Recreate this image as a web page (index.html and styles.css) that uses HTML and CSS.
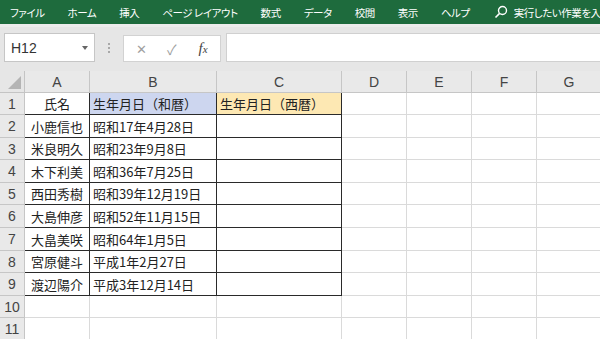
FILE: index.html
```html
<!DOCTYPE html>
<html lang="ja">
<head>
	<meta charset="UTF-8">
	<title>Excel - 生年月日</title>
	<link rel="stylesheet" href="styles.css">
</head>
<body>

	<div class="ribbon">
		<span class="tab">ファイル</span>
		<span class="tab">ホーム</span>
		<span class="tab">挿入</span>
		<span class="tab">ページ レイアウト</span>
		<span class="tab">数式</span>
		<span class="tab">データ</span>
		<span class="tab">校閲</span>
		<span class="tab">表示</span>
		<span class="tab">ヘルプ</span>
		<span class="tell">
			<svg width="14" height="14" viewBox="0 0 14 14">
				<circle cx="8.5" cy="5.5" r="4" fill="none" stroke="#fff" stroke-width="1.4"/>
				<line x1="5.6" y1="8.4" x2="1.5" y2="12.5" stroke="#fff" stroke-width="1.6"/>
			</svg>
			実行したい作業を入
		</span>
	</div>

	<div class="fbar">
		<div class="namebox">
			<span>H12</span>
			<span class="arrow"></span>
		</div>
		<div class="grip">
			<i></i><i></i><i></i>
		</div>
		<div class="fbtns">
			<span class="btn-x">✕</span>
			<span class="btn-ok">✓</span>
			<span class="btn-fx">f<small>x</small></span>
		</div>
		<div class="finput"></div>
	</div>

	<div class="sheet">
		<!-- header row -->
		<div class="corner"></div>
		<div class="ch">A</div>
		<div class="ch">B</div>
		<div class="ch">C</div>
		<div class="ch">D</div>
		<div class="ch">E</div>
		<div class="ch">F</div>
		<div class="ch">G</div>

		<div class="rh">1</div>
		<div class="c t ctr">氏名</div>
		<div class="c t blue">生年月日（和暦）</div>
		<div class="c t yellow">生年月日（西暦）</div>
		<div class="c"></div><div class="c"></div><div class="c"></div><div class="c"></div>

		<div class="rh">2</div>
		<div class="c t ctr">小鹿信也</div>
		<div class="c t">昭和17年4月28日</div>
		<div class="c t"></div>
		<div class="c"></div><div class="c"></div><div class="c"></div><div class="c"></div>

		<div class="rh">3</div>
		<div class="c t ctr">米良明久</div>
		<div class="c t">昭和23年9月8日</div>
		<div class="c t"></div>
		<div class="c"></div><div class="c"></div><div class="c"></div><div class="c"></div>

		<div class="rh">4</div>
		<div class="c t ctr">木下利美</div>
		<div class="c t">昭和36年7月25日</div>
		<div class="c t"></div>
		<div class="c"></div><div class="c"></div><div class="c"></div><div class="c"></div>

		<div class="rh">5</div>
		<div class="c t ctr">西田秀樹</div>
		<div class="c t">昭和39年12月19日</div>
		<div class="c t"></div>
		<div class="c"></div><div class="c"></div><div class="c"></div><div class="c"></div>

		<div class="rh">6</div>
		<div class="c t ctr">大島伸彦</div>
		<div class="c t">昭和52年11月15日</div>
		<div class="c t"></div>
		<div class="c"></div><div class="c"></div><div class="c"></div><div class="c"></div>

		<div class="rh">7</div>
		<div class="c t ctr">大畠美咲</div>
		<div class="c t">昭和64年1月5日</div>
		<div class="c t"></div>
		<div class="c"></div><div class="c"></div><div class="c"></div><div class="c"></div>

		<div class="rh">8</div>
		<div class="c t ctr">宮原健斗</div>
		<div class="c t">平成1年2月27日</div>
		<div class="c t"></div>
		<div class="c"></div><div class="c"></div><div class="c"></div><div class="c"></div>

		<div class="rh">9</div>
		<div class="c t ctr">渡辺陽介</div>
		<div class="c t">平成3年12月14日</div>
		<div class="c t"></div>
		<div class="c"></div><div class="c"></div><div class="c"></div><div class="c"></div>

		<div class="rh">10</div>
		<div class="c"></div><div class="c"></div><div class="c"></div><div class="c"></div>
		<div class="c"></div><div class="c"></div><div class="c"></div>

		<div class="rh">11</div>
		<div class="c"></div><div class="c"></div><div class="c"></div><div class="c"></div>
		<div class="c"></div><div class="c"></div><div class="c"></div>
	</div>

</body>
</html>
```

FILE: styles.css
```css
body {
	margin: 0;
	padding: 0;
	width: 600px;
	height: 339px;
	overflow: hidden;
	font-family: "Noto Sans CJK JP", "Noto Sans", sans-serif;
	background: #fff;
	color: #222;
}

/* ribbon tabs */
.ribbon {
	height: 24px;
	background: #1e6b3d;
	display: flex;
	align-items: center;
	gap: 23px;
	padding-left: 10px;
	color: #fff;
	font-size: 10.5px;
	letter-spacing: -0.45px;
	font-feature-settings: "palt";
	white-space: nowrap;
	overflow: hidden;
}

.tell {
	display: flex;
	align-items: center;
	gap: 6px;
	margin-left: 1px;
}

/* formula bar */
.fbar {
	height: 47px;
	box-sizing: border-box;
	background: #e6e6e6;
	border-top: 3px solid #ececec;
	padding-top: 6px;
	display: flex;
	align-items: flex-start;
}

.namebox {
	width: 91px;
	height: 29px;
	box-sizing: border-box;
	margin-left: 4px;
	background: #fff;
	border: 1px solid #c6c6c6;
	display: flex;
	align-items: center;
	justify-content: space-between;
	padding: 0 6px 0 6px;
	font-family: "Liberation Sans", sans-serif;
	font-size: 14px;
	color: #333;
}

.arrow {
	width: 0;
	height: 0;
	border-left: 3.5px solid transparent;
	border-right: 3.5px solid transparent;
	border-top: 4px solid #666;
}

.grip {
	width: 28px;
	height: 29px;
	display: flex;
	flex-direction: column;
	align-items: center;
	justify-content: center;
	gap: 2px;
}

.grip i {
	width: 2px;
	height: 2px;
	background: #a8a8a8;
}

.fbtns {
	width: 98px;
	height: 27px;
	margin-top: 2px;
	box-sizing: border-box;
	background: #fff;
	border: 1px solid #d2d2d2;
	display: flex;
	align-items: center;
	font-size: 14px;
	color: #a0a0a0;
}

.btn-x {
	margin-left: 12px;
	font-size: 13px;
}

.btn-ok {
	margin-left: 20px;
	font-size: 14px;
}

.btn-fx {
	margin-left: 22px;
	font-family: "Liberation Serif", serif;
	font-style: italic;
	font-size: 15px;
	color: #444;
}

.btn-fx small {
	font-size: 11px;
}

.finput {
	flex: 1;
	height: 29px;
	margin-left: 5px;
	background: #fff;
	border: 1px solid #d0d0d0;
	border-right: none;
	box-sizing: border-box;
}

/* worksheet grid */
.sheet {
	display: grid;
	grid-template-columns: 25px 65px 127px 125px 65px 65px 65px 65px;
	grid-template-rows: 22px 22px 23px 22px 23px 22px 23px 23px 22px 23px 22px 23px;
}

.corner {
	background: #e6e6e6;
	border-right: 1px solid #c4c4c4;
	border-bottom: 1px solid #c4c4c4;
	position: relative;
}

.corner::after {
	content: "";
	position: absolute;
	right: 3px;
	bottom: 3px;
	border-left: 13px solid transparent;
	border-bottom: 13px solid #b4b4b4;
}

.ch,
.rh {
	background: #e9e9e9;
	border-right: 1px solid #c6c6c6;
	border-bottom: 1px solid #c6c6c6;
	display: flex;
	align-items: center;
	justify-content: center;
	font-family: "Liberation Sans", sans-serif;
	font-size: 14px;
	color: #444;
}

.c {
	border-right: 1px solid #dadada;
	border-bottom: 1px solid #dadada;
	display: flex;
	align-items: center;
	padding-left: 3px;
	font-size: 13px;
	white-space: nowrap;
	overflow: hidden;
}

.c.t {
	border-right-color: #2a2a2a;
	border-bottom-color: #2a2a2a;
}

.c.ctr {
	justify-content: center;
	padding-left: 0;
}

.blue {
	background: #cdd6ef;
}

.yellow {
	background: #fde8b3;
}
```
